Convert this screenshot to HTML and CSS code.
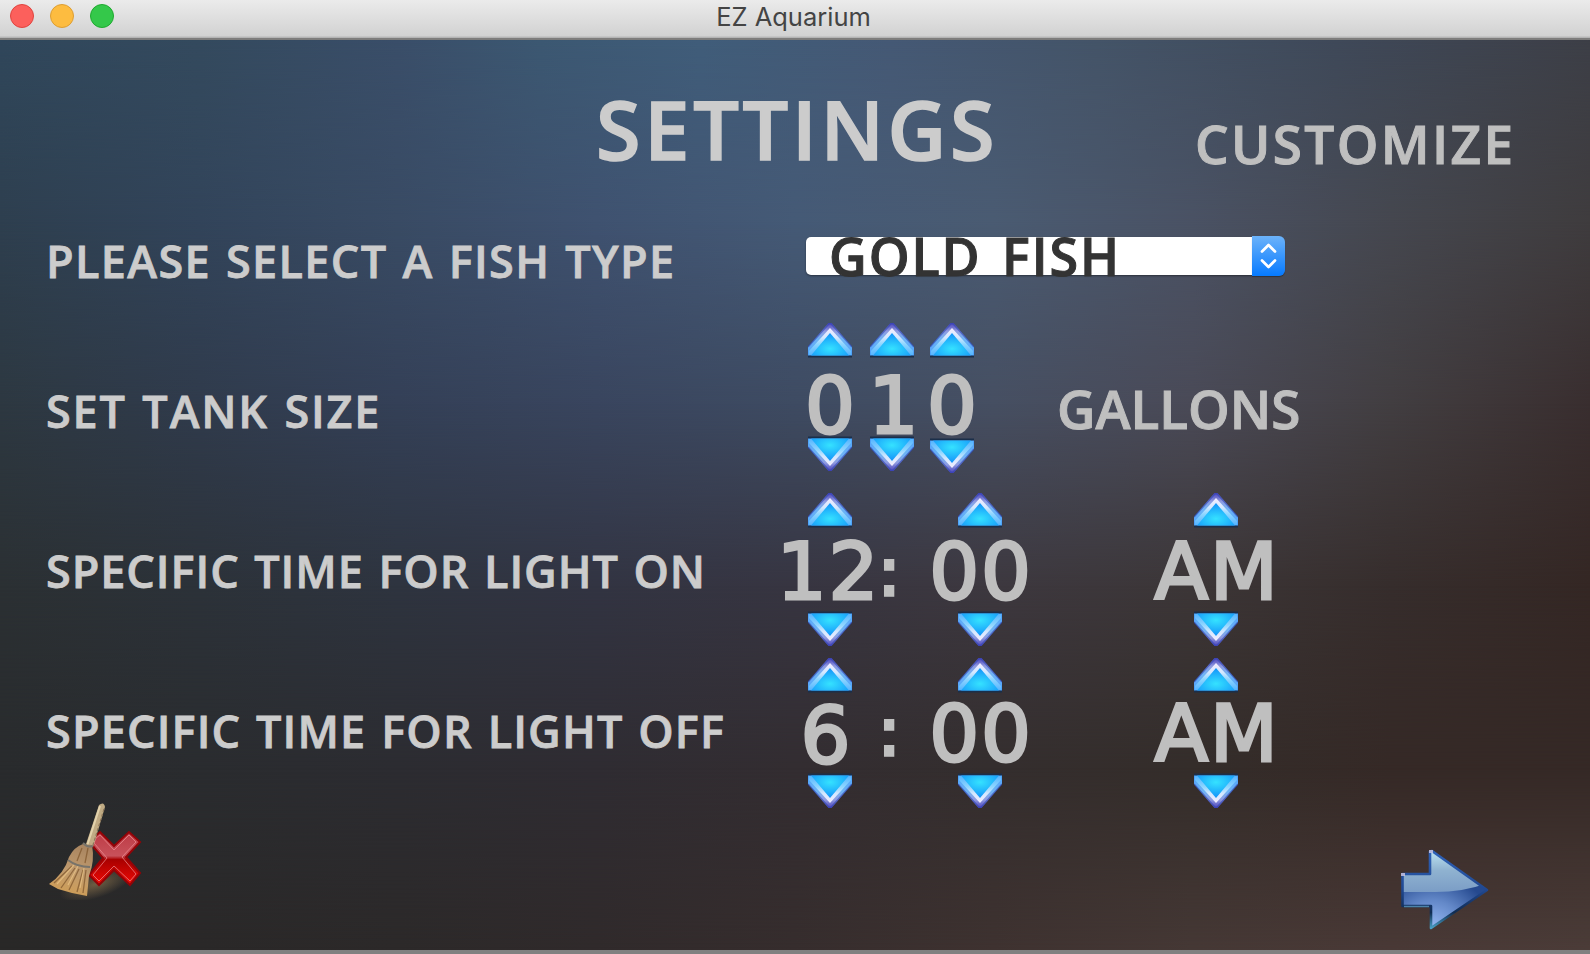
FILE: index.html
```html
<!DOCTYPE html>
<html lang="en">
<head>
<meta charset="utf-8">
<title>EZ Aquarium</title>
<link rel="stylesheet" href="styles.css">
</head>
<body>
<svg class="defs" width="0" height="0" aria-hidden="true">
  <defs>
    <radialGradient id="fill" cx=".5" cy=".7" r=".65"><stop offset="0" stop-color="#35e2ff"/><stop offset="1" stop-color="#1597fa"/></radialGradient>
    <linearGradient id="rim" x1="0" y1="0" x2="0" y2="1"><stop offset="0" stop-color="#4a3fb8"/><stop offset=".25" stop-color="#8f9ae0"/><stop offset=".5" stop-color="#6fb4f5"/><stop offset="1" stop-color="#4aa0fb"/></linearGradient>
    <linearGradient id="shine" x1="0" y1="0" x2="0" y2="1"><stop offset="0" stop-color="#f4edff"/><stop offset=".35" stop-color="#d4e8ff"/><stop offset=".6" stop-color="#8ed6ff"/><stop offset="1" stop-color="#55b4ff"/></linearGradient>
    <symbol id="tri" viewBox="0 0 44 35">
      <path d="M0 32H44V34.500H0z" fill="#1b2f4a"/>
      <path d="M20.500 0H23.500L44 24V32.500H0V24z" fill="url(#rim)"/>
      <path d="M0 24L21 .8H23L44 24" fill="none" stroke="#2f45b4" stroke-opacity=".6" stroke-width="1.500"/>
      <path d="M22 5L43 28V32H1V28z" fill="url(#shine)"/>
      <path d="M22 10L41 32.500H3z" fill="url(#fill)"/>
    </symbol>
  </defs>
</svg>
<div class="window">
  <header class="titlebar">
    <div class="lights"><i class="light close"></i><i class="light mini"></i><i class="light full"></i></div>
    <span class="caption">EZ Aquarium</span>
  </header>
  <main class="screen">
    <div class="backdrop"><i class="b1"></i><i class="b2"></i><i class="b3"></i><i class="b4"></i><i class="b5"></i></div>
    <div class="head">
      <h1 class="heading">SETTINGS</h1>
      <span class="customize">CUSTOMIZE</span>
    </div>
    <div class="fish">
      <label class="label l-fish">PLEASE SELECT A FISH TYPE</label>
      <div class="select">
        <div class="choice"><span>GOLD FISH</span></div>
        <div class="stepper"><svg width="33" height="40" viewBox="0 0 33 40"><path d="M10 15.500L16.500 9L23 15.500M10 24.500L16.500 31L23 24.500" fill="none" stroke="#fff" stroke-width="2.700" stroke-linecap="round" stroke-linejoin="round"/></svg></div>
      </div>
    </div>
    <div class="row tank">
      <label class="label l-tank">SET TANK SIZE</label>
      <div class="spin"><svg class="up"><use href="#tri"/></svg><b>0</b><svg class="down"><use href="#tri"/></svg></div>
      <div class="spin"><svg class="up"><use href="#tri"/></svg><b class="one">1</b><svg class="down"><use href="#tri"/></svg></div>
      <div class="spin low"><svg class="up"><use href="#tri"/></svg><b>0</b><svg class="down"><use href="#tri"/></svg></div>
      <span class="gallons">GALLONS</span>
    </div>
    <div class="row on">
      <label class="label l-on">SPECIFIC TIME FOR LIGHT ON</label>
      <div class="spin"><svg class="up"><use href="#tri"/></svg><b class="hour">12</b><svg class="down"><use href="#tri"/></svg></div>
      <span class="colon">:</span>
      <div class="spin"><svg class="up"><use href="#tri"/></svg><b>00</b><svg class="down"><use href="#tri"/></svg></div>
      <div class="spin half"><svg class="up"><use href="#tri"/></svg><b>AM</b><svg class="down"><use href="#tri"/></svg></div>
    </div>
    <div class="row off">
      <label class="label l-off">SPECIFIC TIME FOR LIGHT OFF</label>
      <div class="spin"><svg class="up"><use href="#tri"/></svg><b class="six">6</b><svg class="down"><use href="#tri"/></svg></div>
      <span class="colon">:</span>
      <div class="spin"><svg class="up"><use href="#tri"/></svg><b>00</b><svg class="down"><use href="#tri"/></svg></div>
      <div class="spin half"><svg class="up"><use href="#tri"/></svg><b>AM</b><svg class="down"><use href="#tri"/></svg></div>
    </div>
    <div class="actions">
      <svg class="broom" width="100" height="100" viewBox="0 0 100 100">
        <defs>
          <linearGradient id="straw" x1=".6" y1="0" x2=".4" y2="1"><stop offset="0" stop-color="#a98560"/><stop offset=".5" stop-color="#bf9a6e"/><stop offset="1" stop-color="#d09e55"/></linearGradient>
          <linearGradient id="red" x1="0" y1="0" x2="0" y2="1"><stop offset="0" stop-color="#bd3b45"/><stop offset=".45" stop-color="#c8515a"/><stop offset=".52" stop-color="#a80000"/><stop offset="1" stop-color="#f00a05"/></linearGradient>
          <radialGradient id="glow"><stop offset="0" stop-color="#a88958" stop-opacity=".55"/><stop offset="1" stop-color="#a88958" stop-opacity="0"/></radialGradient>
        </defs>
        <ellipse cx="50" cy="84" rx="38" ry="14" transform="rotate(-18 50 84)" fill="url(#glow)"/>
        <path d="M47 38L54 32L68 46L83 32L94 42L80 57L94 73L84 85L68 70L53 85L43 75L57 58L45 44z" fill="url(#red)" stroke="#930307" stroke-width="2"/>
        <path d="M50 38L54 35L68 50L83 35L90 42L76 57L90 74L84 81L68 66L53 81L47 75L61 58L48 43z" fill="none" stroke="#ee9295" stroke-width="1" stroke-opacity=".7"/>
        <path d="M53 5Q58 1 59 7L47 47H39z" fill="#c0ab84"/>
        <path d="M54 6L41 46" stroke="#e2d2ac" stroke-width="2"/><path d="M58 9L47 45" stroke="#8b7558" stroke-width="1.200" stroke-dasharray="3 2"/>
        <path d="M37 44L46 45Q49 61 43 76L41 96L26 93L12 89L3 84Q18 74 23 57Q28 47 37 44z" fill="url(#straw)"/>
        <path d="M36 48L31 61M42 48L39 63M26 66L8 83M29 68L15 88M33 69L23 90M37 70L31 92M40 70L37 93" stroke="#80582f" stroke-width="1.300" stroke-opacity=".75" fill="none"/>
        <path d="M32 66L22 85M38 68L34 88M28 65L11 84" stroke="#edc687" stroke-width="1.200" stroke-opacity=".7"/>
        <path d="M37 43Q42 48 47 46M22 60Q31 67 44 67" stroke="#77736a" stroke-width="2" fill="none"/>
      </svg>
      <svg class="next" width="90" height="82" viewBox="0 0 90 82">
        <defs>
          <linearGradient id="sky" x1="0" y1="0" x2="0" y2="1"><stop offset="0" stop-color="#c2e8f5"/><stop offset=".5" stop-color="#8fb2d0"/><stop offset="1" stop-color="#7b9dc6"/></linearGradient>
          <radialGradient id="deep" cx=".36" cy=".95" r=".65"><stop offset="0" stop-color="#94b6f1"/><stop offset=".5" stop-color="#6388c8"/><stop offset="1" stop-color="#25498f"/></radialGradient>
          <linearGradient id="edge" x1="0" y1="0" x2="0" y2="1"><stop offset="0" stop-color="#2f62b8"/><stop offset=".5" stop-color="#204891"/><stop offset=".8" stop-color="#102c52"/><stop offset="1" stop-color="#489fc4"/></linearGradient>
          <clipPath id="shape"><path d="M2 25H31V2L87 41L31 79V57H2z"/></clipPath>
        </defs>
        <g clip-path="url(#shape)"><path d="M0 0H90V82H0z" fill="url(#deep)"/><path d="M0 0H90V33Q65 43 35 43H0z" fill="url(#sky)"/></g>
        <path d="M2.500 25H30V2.500L32 2L87 41L31 79V57H2.500z" fill="none" stroke="url(#edge)" stroke-width="2.600" stroke-linejoin="round"/>
        <path d="M4 57.500H29" stroke="#4b83a8" stroke-width="1.500"/>
        <path d="M1 24H5V27H1zM29 1H33V4H29z" fill="#cfc9e5" fill-opacity=".8"/>
      </svg>
    </div>
  </main>
</div>
</body>
</html>
```
FILE: styles.css
```css
* { box-sizing: border-box; }
body { margin: 0; background: #808080; }
.defs { display: block; }
.window { width: 1590px; height: 954px; overflow: hidden; display: flex; flex-direction: column; }
.titlebar {
  height: 40px; flex: none; display: grid; grid-template-columns: 1fr auto 1fr; align-items: start;
  background: linear-gradient(#ebebeb, #d2d2d2 36px, #b8b8b8 37px, #b1b1b1 38px, #7e7d7c 38px);
}
.lights { display: flex; gap: 16px; padding: 4px 0 0 10px; }
.light { width: 24px; height: 24px; border-radius: 50%; border: 1px solid; }
.close { background: #fc605c; border-color: #e0443f; }
.mini { background: #fdbc40; border-color: #dd9e33; }
.full { background: #34c84a; border-color: #1faa2f; }
.caption { font: 400 25.5px/34px Inter, sans-serif; color: #444; padding-right: 3px; }

.screen { position: relative; height: 910px; flex: none; display: flex; flex-direction: column; font-family: "Open Sans", "Noto Sans", sans-serif; font-weight: 600; color: #ccc; }
.screen > * { position: relative; }
.screen > .backdrop { position: absolute; inset: 0; background: linear-gradient(90deg, #30475b, #344a5e 12.500%, #3a4e69 25%, #3c5872 34%, #405d7a 44%, #455975 56%, #445468 69%, #3f4959 84%, #3d3f47); }
.backdrop i { position: absolute; left: 0; right: 0; bottom: 0; }
.b1 { top: 0; background: linear-gradient(90deg, #2e3f4f, #32445a 12.500%, #394b64 25%, #3f5270 37.500%, #455a76 50%, #4a5b72 62.500%, #4a5264 75%, #45474f 87.500%, #3f3c3e); mask-image: linear-gradient(transparent, #000 182px); }
.b2 { top: 182px; background: linear-gradient(90deg, #2d3841, #303b4c 12.500%, #344057 25%, #39455e 37.500%, #3e4b62 50%, #464f62 62.500%, #4a4a57 75%, #423e41 87.500%, #392e2f); mask-image: linear-gradient(transparent, #000 182px); }
.b3 { top: 364px; background: linear-gradient(90deg, #2b3033, #2c3239 12.500%, #2e343f 25%, #323442 37.500%, #373541 50%, #3d383f 62.500%, #3c3637 75%, #362d2c 87.500%, #342724); mask-image: linear-gradient(transparent, #000 182px); }
.b4 { top: 546px; background: linear-gradient(90deg, #292b2d, #2a2c2f 12.500%, #2c2c31 25%, #2f2c32 37.500%, #332d31 50%, #342e2e 62.500%, #342d2a 75%, #352926 87.500%, #352926); mask-image: linear-gradient(transparent, #000 182px); }
.b5 { top: 728px; background: linear-gradient(90deg, #292827, #2a2828 12.500%, #2c2929 25%, #302a2b 37.500%, #362d2d 50%, #3e3230 62.500%, #453835 75%, #493936 87.500%, #4b3c38); mask-image: linear-gradient(transparent, #000 182px); }

.head { height: 196px; display: grid; grid-template-columns: 1190px 1fr; }
.heading { margin: 62px 0 0; padding-left: 596px; font-size: 81px; line-height: 54px; height: 66px; font-weight: 600; letter-spacing: 3.700px; white-space: nowrap; -webkit-text-stroke: 1.500px #ccc; }
.customize { margin-top: 84px; padding-left: 5px; font-size: 53px; line-height: 40px; color: #bfbfbf; white-space: nowrap; letter-spacing: 2.400px; -webkit-text-stroke: 1px #bfbfbf; }

.label { font-size: 45px; line-height: 46px; white-space: nowrap; word-spacing: 2px; -webkit-text-stroke: .8px #ccc; }
.fish { height: 87px; display: grid; grid-template-columns: 806px auto; justify-content: start; align-items: start; }
.l-fish { padding: 1.500px 0 0 46px; letter-spacing: 1.350px; }
.l-tank { letter-spacing: 1.850px; }
.l-on { letter-spacing: .950px; }
.l-off { letter-spacing: 1.150px; }
.select { display: flex; align-items: center; }
.choice { width: 446px; height: 38px; background: #fff; color: #333; border-radius: 5px 0 0 5px; box-shadow: 0 1px 2px #0006; font-size: 52px; line-height: 38px; padding-left: 23px; white-space: nowrap; letter-spacing: 1.900px; word-spacing: 5px; -webkit-text-stroke: 1px #333; }
.stepper { width: 33px; height: 40px; border-radius: 0 6px 6px 0; background: linear-gradient(#6cb3fa, #067aff); box-shadow: 0 1px 1px #0005; }
.stepper svg { display: block; }

.row { display: grid; align-items: start; justify-content: start; }
.tank { height: 170px; grid-template-columns: 798px 64px 60px 60px auto; }
.on { height: 165px; grid-template-columns: 770px 120px 17px 146px 326px; }
.off { height: 142px; grid-template-columns: 770px 120px 17px 146px 326px; }
.spin { display: flex; flex-direction: column; align-items: center; }
.spin svg { width: 44px; height: 35px; flex: none; }
.down { transform: scaleY(-1); }
.spin b { display: block; height: 78px; font: 400 78.500px/78px "DejaVu Sans", sans-serif; color: #bfbfbf; -webkit-text-stroke: 3px #bfbfbf; white-space: nowrap; }
.on b, .off b { letter-spacing: 1.800px; margin-right: -1.800px; }
.tank .spin b { line-height: 96px; }
.tank .spin .one { padding-left: 3px; }
.tank .low b { height: 80px; }
.on .spin b { height: 83px; line-height: 88px; }
.off .spin b { height: 80px; line-height: 83px; }
.off .spin .six { line-height: 86px; padding-right: 9px; }
.on .spin .hour { padding-right: 5px; }
.tank .label { padding: 65px 0 0 46px; }
.on .label { padding: 55px 0 0 46px; }
.off .label { padding: 50px 0 0 46px; }
.gallons { font-size: 53px; line-height: 60px; color: #bfbfbf; padding: 56px 0 0 75px; white-space: nowrap; -webkit-text-stroke: 1px #bfbfbf; }
.colon { font: 400 66px/80px "DejaVu Sans", sans-serif; color: #bfbfbf; -webkit-text-stroke: 3.500px #bfbfbf; margin-left: -12px; padding-top: 40px; }
.off .colon { padding-top: 35px; }

.actions { display: flex; justify-content: space-between; padding: 0 100px 0 46px; align-items: flex-start; }
.next { margin-top: 49px; }
```
